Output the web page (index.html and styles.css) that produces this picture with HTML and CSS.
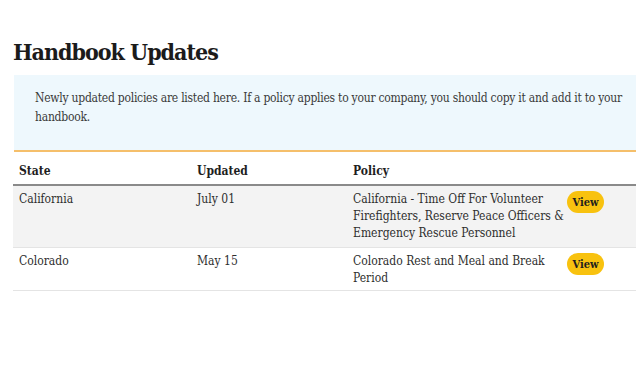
FILE: index.html
```html
<!DOCTYPE html>
<html>
<head>
<meta charset="utf-8">
<link rel="stylesheet" href="styles.css">
</head>
<body>
<div class="page">
  <h1 class="title">Handbook Updates</h1>
  <div class="notice">
    <p>Newly updated policies are listed here. If a policy applies to your company, you should copy it and add it to your handbook.</p>
  </div>
  <table class="updates">
    <thead>
      <tr>
        <th class="c-state">State</th>
        <th class="c-date">Updated</th>
        <th class="c-policy">Policy</th>
        <th class="c-action"></th>
      </tr>
    </thead>
    <tbody>
      <tr class="alt">
        <td>California</td>
        <td>July 01</td>
        <td class="policy">California - Time Off For Volunteer Firefighters, Reserve Peace Officers &amp; Emergency Rescue Personnel</td>
        <td class="action"><button class="view">View</button></td>
      </tr>
      <tr>
        <td>Colorado</td>
        <td>May 15</td>
        <td class="policy">Colorado Rest and Meal and Break Period</td>
        <td class="action"><button class="view">View</button></td>
      </tr>
    </tbody>
  </table>
</div>
</body>
</html>
```

FILE: styles.css
```css
html, body {
  margin: 0;
  padding: 0;
  background: #ffffff;
  overflow: hidden;
}
body {
  font-family: "DejaVu Serif Condensed", "DejaVu Serif", serif;
  font-stretch: condensed;
  color: #333333;
}
.page {
  padding: 37px 0 0 13px;
}
.title {
  margin: 0;
  font-size: 23px;
  line-height: 30px;
  font-weight: bold;
  color: #1b1b1b;
  letter-spacing: -1px;
}
.notice {
  margin: 8px 0 0 1px;
  background: #eef8fd;
  border-bottom: 2px solid #f5bf6b;
  padding: 14px 0 23px 21px;
  height: 38px;
}
.notice p {
  margin: 0;
  font-size: 12px;
  line-height: 19px;
  color: #3a3a3a;
  letter-spacing: -0.25px;
  width: 600px;
}
.updates {
  border-collapse: collapse;
  width: 623px;
  font-size: 12px;
  color: #2e2e2e;
}
.updates th {
  text-align: left;
  font-weight: bold;
  color: #1e1e1e;
  padding: 11px 6px 5px 6px;
  line-height: 16px;
  border-bottom: 2px solid #8a8a8a;
}
.updates td {
  vertical-align: top;
  padding: 5px 6px 5px 6px;
  line-height: 17px;
  border-bottom: 1px solid #e4e4e4;
}
.updates tbody tr:last-child td {
  padding-bottom: 3px;
}
.c-state { width: 166px; }
.c-date { width: 144px; }
.updates .c-policy { width: 214px; padding-right: 0; }
.updates td.policy { padding-right: 0; }
.updates td.action { padding-left: 0; }
.updates tr.alt td {
  background: #f3f3f3;
}
.view {
  margin: 0;
  border: none;
  background: #f8c20f;
  color: #1e1e1e;
  font-family: inherit;
  font-stretch: condensed;
  font-weight: bold;
  font-size: 11px;
  height: 22px;
  width: 37px;
  padding: 0;
  border-radius: 11px;
}
```
